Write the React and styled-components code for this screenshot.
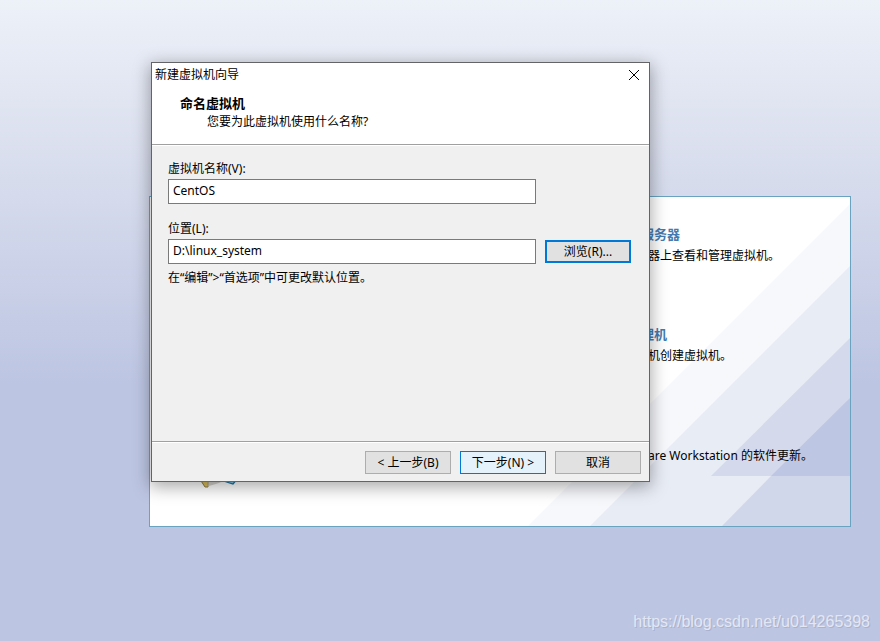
import React from "react";
import styled, { createGlobalStyle } from "styled-components";

const GlobalStyle = createGlobalStyle`
  *, *::before, *::after { box-sizing: border-box; }
  body {
    margin: 0;
    font: 12px/18px "Noto Sans", "Noto Sans CJK SC", sans-serif;
    color: #000;
  }
  button, input { font: inherit; color: inherit; }
  h1, h2, h3, p { margin: 0; font-size: inherit; font-weight: inherit; }
`;

const Desktop = styled.main`
  position: relative;
  display: flex;
  flex-direction: column;
  min-height: 100vh;
  background: #bcc5e2 linear-gradient(#edf1f8, #d5daec 196px, #bcc5e2 384px) no-repeat;
`;

const HomePanel = styled.section`
  position: relative;
  margin: 196px 29px 0 149px;
  padding: 27px 0 37px 45px;
  display: grid;
  grid-template-rows: 60px 60px 65px;
  row-gap: 40px;
  background: #fff;
  border: 1px solid #69a3c0;
`;

const Stripes = styled.svg`
  position: absolute;
  right: 0;
  bottom: 0;
  width: 322px;
  height: 322px;
`;

const Shortcut = styled.article`
  position: relative;
  display: grid;
  grid-template-columns: 48px 1fr;
  column-gap: 398px;
`;

const ShortcutIcon = styled.svg`
  align-self: end;
  width: 48px;
  height: 64px;
`;

const ShortcutText = styled.div`
  grid-column: 2;
  display: flex;
  flex-direction: column;
  gap: 2px;
  height: 42px;
  justify-content: flex-end;
  line-height: 20px;
`;

const ShortcutTitle = styled.h3`
  font-size: 13px;
  font-weight: bold;
  color: #447ab0;
`;

const ShortcutNote = styled.p`
  padding-left: 7px;
`;

const Overlay = styled.div`
  position: absolute;
  inset: 0;
  padding: 62px 230px 0 151px;
`;

const Dialog = styled.form`
  display: flex;
  flex-direction: column;
  background: #f0f0f0;
  border: 1px solid #646468;
  box-shadow: 0 4px 16px 1px rgba(0, 0, 0, 0.34);
`;

const DialogHeader = styled.header`
  min-height: 82px;
  background: #fff;
  border-bottom: 1px solid #a0a0a0;
  box-shadow: 0 1px #fff;
  margin-bottom: 1px;
`;

const TitleBar = styled.div`
  display: flex;
  justify-content: space-between;
  align-items: center;
  height: 24px;
  padding: 0 9px 0 3px;
`;

const CloseButton = styled.button`
  display: flex;
  padding: 0;
  border: 0;
  background: none;
`;

const Heading = styled.h2`
  padding: 7px 0 0 28px;
  font-size: 13px;
  font-weight: bold;
`;

const Subheading = styled.p`
  padding: 1px 0 0 55px;
`;

const Fields = styled.div`
  display: grid;
  grid-template-columns: 1fr 86px;
  column-gap: 9px;
  align-items: center;
  align-content: start;
  min-height: 295px;
  padding: 14px 18px 0 16px;
`;

const Label = styled.label`
  grid-column: 1;
  padding-bottom: 1px;
`;

const TextBox = styled.input`
  grid-column: 1;
  width: 100%;
  height: 25px;
  margin-bottom: ${(p) => (p.$spaced ? 16 : 0)}px;
  padding: 0 4px 3px;
  background: #fff;
  border: 1px solid #7a7a7a;
  border-radius: 0;
  outline: 0;
`;

const Hint = styled.p`
  grid-column: 1 / -1;
  padding-top: 5px;
`;

const tones = {
  plain: "border: 1px solid #adadad; background: #e1e1e1;",
  hot: "border: 1px solid #0078d7; background: #e5f1fb;",
  primary: "border: 2px solid #0078d7; background: #e1e1e1;",
};

const Button = styled.button`
  display: flex;
  align-items: center;
  justify-content: center;
  width: 86px;
  height: 23px;
  padding: 0;
  border-radius: 0;
  white-space: nowrap;
  ${(p) => tones[p.$tone || "plain"]}
`;

const Actions = styled.footer`
  display: flex;
  justify-content: flex-end;
  gap: 9px;
  padding: 9px 8px 7px;
  border-top: 1px solid #a0a0a0;
  box-shadow: inset 0 1px #fff;
`;

const Watermark = styled.a`
  position: absolute;
  right: 10px;
  bottom: 8px;
  font: 16px/22px "Liberation Sans", sans-serif;
  color: #e3e7f3;
  text-decoration: none;
  text-shadow: 1px 1px #a9b2cf;
`;

export default function App() {
  return (
    <>
      <GlobalStyle />
      <Desktop>
        <HomePanel>
          <Stripes viewBox="0 0 322 322" aria-hidden="true">
            <path d="M0 322L322 0V322Z" fill="#f7f8fc" />
            <path d="M62 322L322 62V322Z" fill="#e8ecf5" />
            <path d="M183 272L322 134V272Z" fill="#d4daec" />
            <path d="M243 272L322 194V272Z" fill="#bdc6e3" />
            <path d="M194 322L243 272H322V322Z" fill="#d1d7ea" />
          </Stripes>
          <Shortcut>
            <ShortcutText>
              <ShortcutTitle>服务器</ShortcutTitle>
              <ShortcutNote>器上查看和管理虚拟机。</ShortcutNote>
            </ShortcutText>
          </Shortcut>
          <Shortcut>
            <ShortcutText>
              <ShortcutTitle>理机</ShortcutTitle>
              <ShortcutNote>机创建虚拟机。</ShortcutNote>
            </ShortcutText>
          </Shortcut>
          <Shortcut>
            <ShortcutIcon viewBox="0 0 48 64" aria-hidden="true">
              <path d="M13 54H32L24 58L14 61Z" fill="#b9b5ae" opacity=".6" />
              <path d="M5 55L10 62H12.500V52H5Z" fill="#dcbf5c" />
              <path d="M5.500 55L10 62H13V52" fill="none" stroke="#8c7c48" />
              <path d="M27 55.500L38 59L41 55.500V50H27Z" fill="#83c9e6" stroke="#246f9c" strokeWidth="1.200" />
            </ShortcutIcon>
            <ShortcutText>
              <ShortcutNote>are Workstation 的软件更新。</ShortcutNote>
            </ShortcutText>
          </Shortcut>
        </HomePanel>

        <Overlay>
          <Dialog role="dialog" aria-labelledby="wizard-title" onSubmit={(e) => e.preventDefault()}>
            <DialogHeader>
              <TitleBar>
                <h1 id="wizard-title">新建虚拟机向导</h1>
                <CloseButton type="button" aria-label="关闭">
                  <svg width="12" height="12" viewBox="0 0 12 12" aria-hidden="true">
                    <path d="M1 1L11 11M11 1L1 11" stroke="#000" />
                  </svg>
                </CloseButton>
              </TitleBar>
              <Heading>命名虚拟机</Heading>
              <Subheading>您要为此虚拟机使用什么名称?</Subheading>
            </DialogHeader>
            <Fields>
              <Label htmlFor="vm-name">虚拟机名称(V):</Label>
              <TextBox id="vm-name" defaultValue="CentOS" $spaced />
              <Label htmlFor="vm-path">位置(L):</Label>
              <TextBox id="vm-path" defaultValue="D:\linux_system" />
              <Button type="button" $tone="primary">浏览(R)...</Button>
              <Hint>在“编辑”&gt;“首选项”中可更改默认位置。</Hint>
            </Fields>
            <Actions>
              <Button type="button">&lt; 上一步(B)</Button>
              <Button type="submit" $tone="hot">下一步(N) &gt;</Button>
              <Button type="button">取消</Button>
            </Actions>
          </Dialog>
        </Overlay>
        <Watermark href="https://blog.csdn.net/u014265398">https://blog.csdn.net/u014265398</Watermark>
      </Desktop>
    </>
  );
}
